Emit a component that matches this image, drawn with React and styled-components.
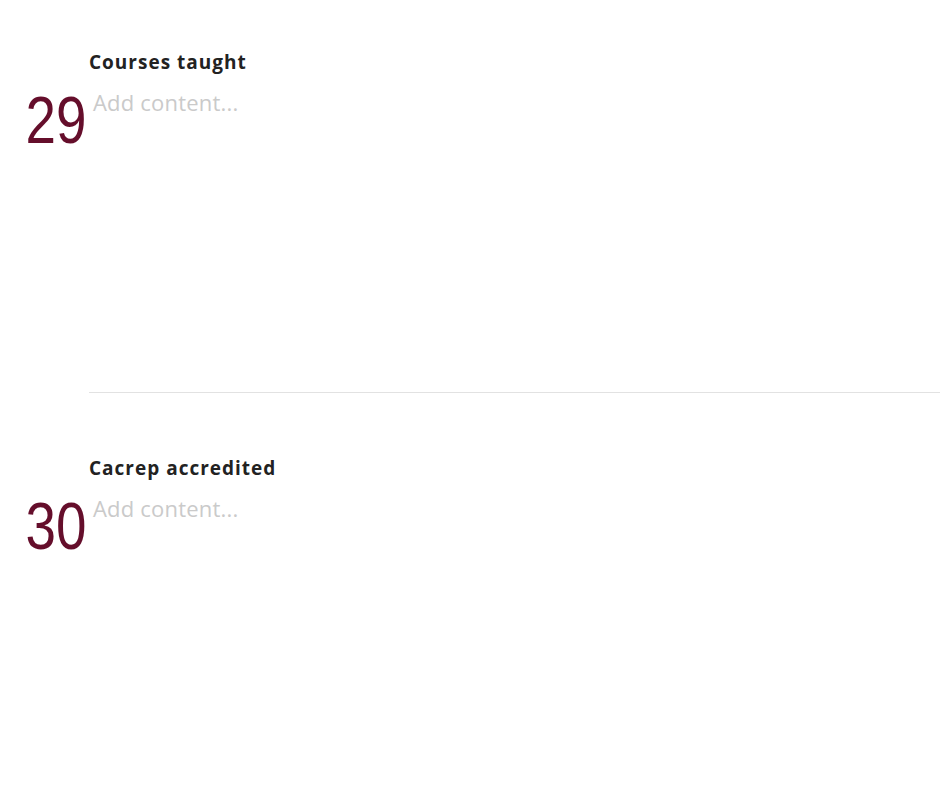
import styled, { createGlobalStyle } from 'styled-components'

const GlobalStyle = createGlobalStyle`
  html, body {
    margin: 0;
    padding: 0;
    background: #fff;
  }
  body {
    font-family: "Open Sans", "Liberation Sans", sans-serif;
  }
`

const items = [
  { num: 29, title: 'Courses taught' },
  { num: 30, title: 'Cacrep accredited' },
]

export default function App() {
  return (
    <Page>
      <GlobalStyle />
      {items.map((item, idx) => (
        <div key={item.num}>
          {idx > 0 && <Divider />}
          <Section $first={idx === 0}>
            <Title>{item.title}</Title>
            <Number>{item.num}</Number>
            <Placeholder>Add content...</Placeholder>
          </Section>
        </div>
      ))}
    </Page>
  )
}

const Page = styled.div`
  width: 940px;
  min-height: 788px;
  display: flex;
  flex-direction: column;
  overflow: hidden;
`

const Divider = styled.hr`
  margin: 0 0 0 89px;
  border: none;
  border-top: 1px solid #e2e2e2;
  height: 0;
`

const Section = styled.section`
  display: grid;
  grid-template-columns: 89px 1fr;
  align-content: start;
  box-sizing: border-box;
  height: ${props => props.$first ? '392px' : '395px'};
  padding-top: ${props => props.$first ? '51px' : '64px'};
`

const Title = styled.h3`
  grid-column: 2;
  margin: 0;
  font-size: 19px;
  line-height: 22px;
  font-weight: 700;
  color: #222;
  letter-spacing: 1px;
`

const Number = styled.div`
  grid-column: 1;
  margin-top: 14px;
  padding-right: 3px;
  text-align: right;
  font-family: "Liberation Sans", Arial, sans-serif;
  font-size: 66px;
  line-height: 1;
  color: #650e2b;
  white-space: nowrap;
  transform: scaleX(0.83);
  transform-origin: right center;
`

const Placeholder = styled.div`
  grid-column: 2;
  margin-top: 14px;
  padding-left: 4px;
  font-size: 22px;
  line-height: 30px;
  letter-spacing: 0.2px;
  color: #cacaca;
`
